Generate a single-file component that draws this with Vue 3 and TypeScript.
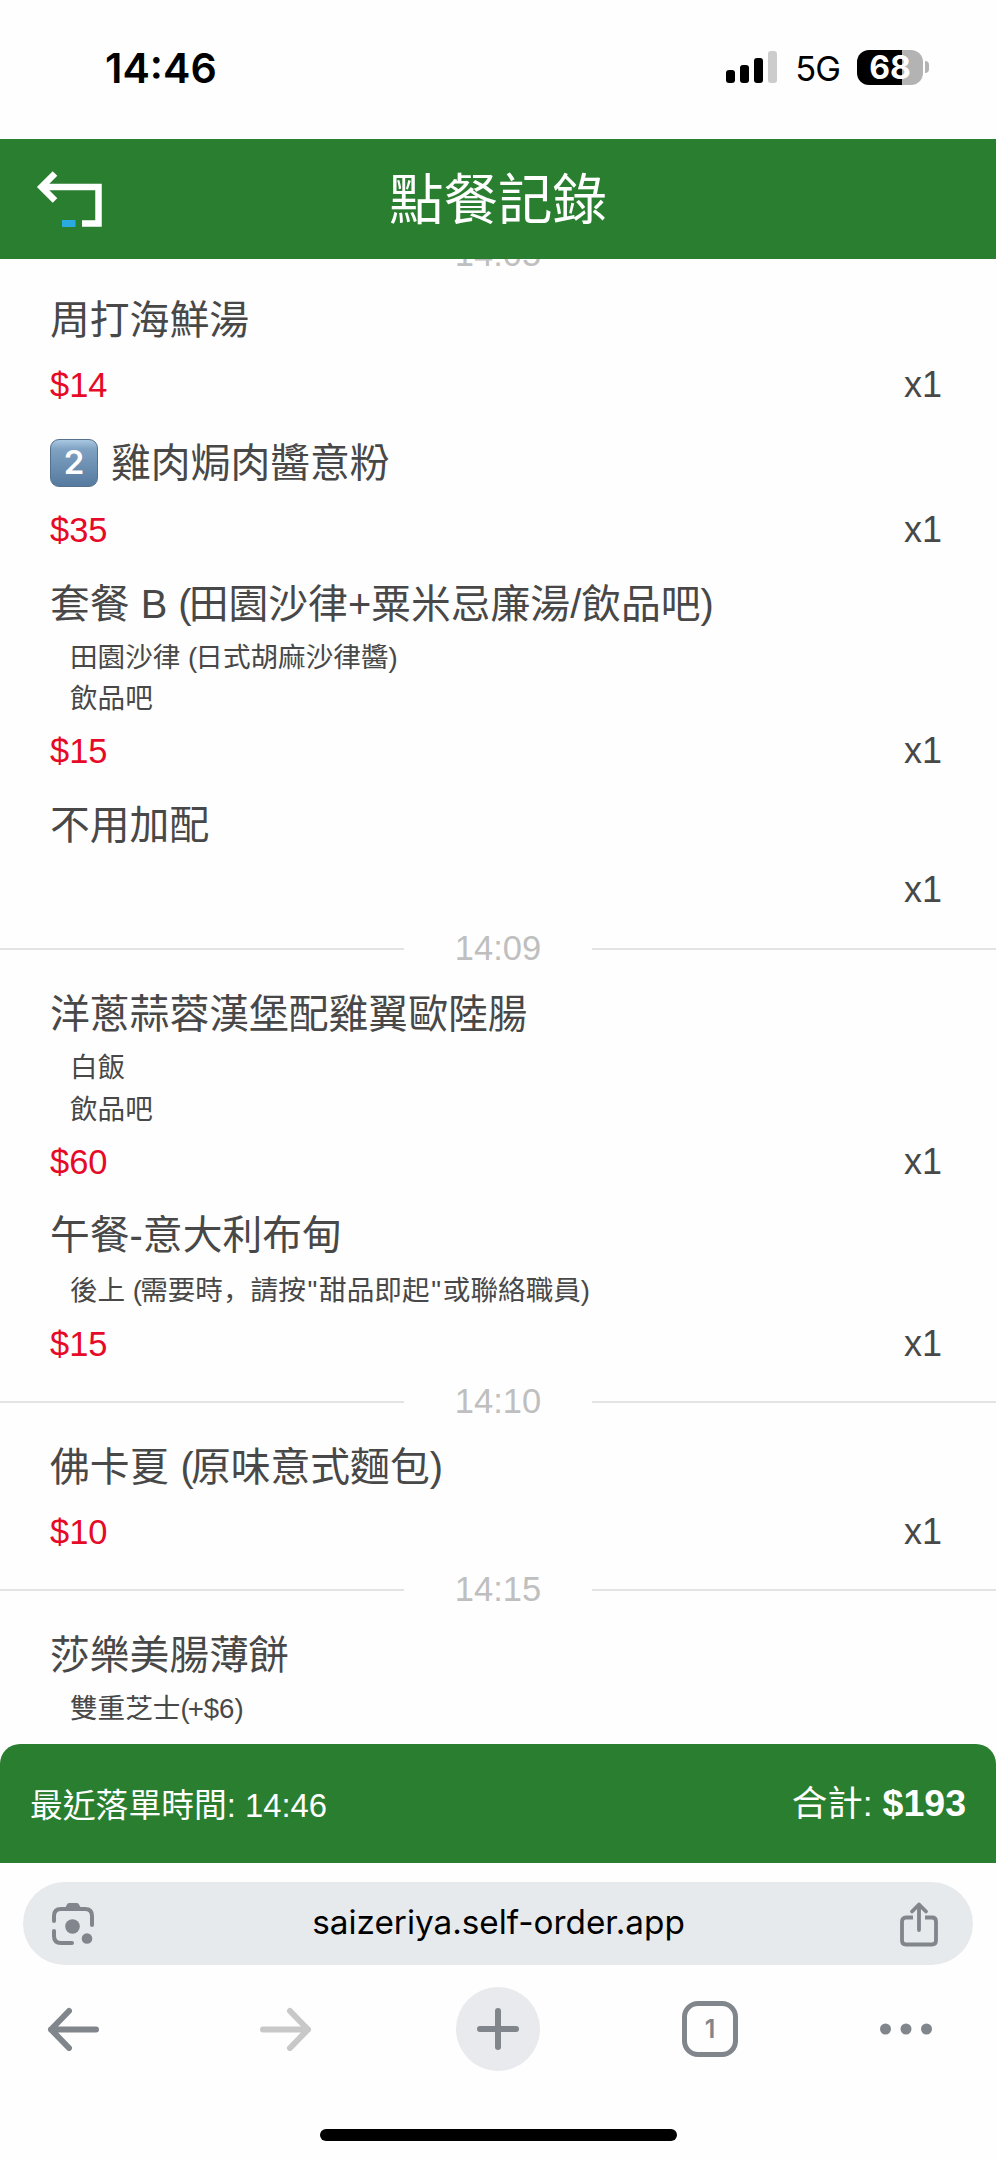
<script setup lang="ts">
interface OrderItem {
  name: string
  badge?: string
  options?: string[]
  price?: string
  qty: string
}
interface OrderGroup {
  time: string
  items: OrderItem[]
}
interface Segment {
  text: string
  kind: string
}

const groups: OrderGroup[] = [
  {
    time: '14:05',
    items: [
      { name: '周打海鮮湯', price: '$14', qty: 'x1' },
      { name: '雞肉焗肉醬意粉', badge: '2', price: '$35', qty: 'x1' },
      {
        name: '套餐 B (田園沙律+粟米忌廉湯/飲品吧)',
        options: ['田園沙律 (日式胡麻沙律醬)', '飲品吧'],
        price: '$15',
        qty: 'x1',
      },
      { name: '不用加配', qty: 'x1' },
    ],
  },
  {
    time: '14:09',
    items: [
      { name: '洋蔥蒜蓉漢堡配雞翼歐陸腸', options: ['白飯', '飲品吧'], price: '$60', qty: 'x1' },
      {
        name: '午餐-意大利布甸',
        options: ['後上 (需要時，請按"甜品即起"或聯絡職員)'],
        price: '$15',
        qty: 'x1',
      },
    ],
  },
  {
    time: '14:10',
    items: [{ name: '佛卡夏 (原味意式麵包)', price: '$10', qty: 'x1' }],
  },
  {
    time: '14:15',
    items: [{ name: '莎樂美腸薄餅', options: ['雙重芝士(+$6)'], price: '', qty: '' }],
  },
]

// Punctuation gets its own span so its spacing can be tuned against CJK text.
function segments(text: string): Segment[] {
  return text
    .split(/([()"，])/)
    .filter((part) => part !== '')
    .map((part) => {
      if (part === '(' || part === ')') return { text: part, kind: 'paren' }
      if (part === '"') return { text: part, kind: 'quote' }
      if (part === '，') return { text: part, kind: 'comma' }
      return { text: part, kind: 'plain' }
    })
}
</script>

<template>
  <div class="phone">
    <div class="status">
      <span class="clock">14:46</span>
      <div class="indicators">
        <svg class="signal" width="52" height="34" viewBox="0 0 52 34">
          <rect x="0" y="20" width="9" height="13" rx="3" />
          <rect x="14" y="15" width="9" height="18" rx="3" />
          <rect x="28" y="8" width="9" height="25" rx="3" />
          <rect x="42" y="1" width="9" height="32" rx="3" fill="#ccc" />
        </svg>
        <span class="network">5G</span>
        <div class="battery"><span>68</span></div>
        <i class="battery-cap"></i>
      </div>
    </div>

    <header class="header">
      <svg class="back" width="68" height="60" viewBox="0 0 68 60">
        <path d="M19 4.500 5.500 18 19 31.500M7 18H62.500V54.500H46" fill="none" stroke="#fff" stroke-width="6.500" />
        <rect x="26" y="51" width="13.500" height="7" fill="#29abe2" />
      </svg>
      <h1>點餐記錄</h1>
    </header>

    <main class="list">
      <section v-for="group in groups" :key="group.time">
        <div class="divider"><span>{{ group.time }}</span></div>
        <article v-for="item in group.items" :key="item.name" class="item">
          <h2 class="name" :class="{ badged: item.badge }">
            <span v-if="item.badge" class="badge">{{ item.badge }}</span>
            <span class="label"><span v-for="(s, i) in segments(item.name)" :key="i" :class="s.kind">{{ s.text }}</span></span>
          </h2>
          <ul v-if="item.options" class="options">
            <li v-for="option in item.options" :key="option"><span v-for="(s, i) in segments(option)" :key="i" :class="s.kind">{{ s.text }}</span></li>
          </ul>
          <div class="row">
            <span class="price">{{ item.price }}</span>
            <span class="qty">{{ item.qty }}</span>
          </div>
        </article>
      </section>
    </main>

    <footer class="summary">
      <span class="last">最近落單時間: 14:46</span>
      <span class="total">合計: <b>$193</b></span>
    </footer>

    <div class="browser">
      <div class="address">
        <svg width="44" height="44" viewBox="0 0 44 44" fill="none" stroke="#80868b" stroke-width="4" stroke-linecap="round">
          <path d="M3 19V14Q3 7 10 7H34Q41 7 41 14V23M3 29V34Q3 41 10 41H21" />
          <path d="M13 8 16 2.500Q16.500 1 18 1H26Q27.500 1 28 2.500L31 8Z" fill="#80868b" stroke="none" />
          <circle cx="21.500" cy="24.500" r="7.300" fill="#80868b" stroke="none" />
          <circle cx="36" cy="36.500" r="5.300" fill="#80868b" stroke="none" />
        </svg>
        <span class="url">saizeriya.self-order.app</span>
        <svg width="40" height="46" viewBox="0 0 40 46" fill="none" stroke="#80868b" stroke-width="3.800" stroke-linecap="round" stroke-linejoin="round">
          <path d="M14 16.500H7Q3 16.500 3 20.500V39.500Q3 43.500 7 43.500H33Q37 43.500 37 39.500V20.500Q37 16.500 33 16.500H26" stroke-linecap="butt" />
          <path d="M20 29V3.500M13 10.500 20 3.500 27 10.500" />
        </svg>
      </div>
      <nav class="tools">
        <svg width="52" height="44" viewBox="0 0 52 44" fill="none" stroke="#80868b" stroke-width="6" stroke-linecap="round" stroke-linejoin="round">
          <path d="M49 22.500H4M22 4 4 22.500 22 41" />
        </svg>
        <svg class="forward" width="52" height="44" viewBox="0 0 52 44" fill="none" stroke="#c8c8c8" stroke-width="6" stroke-linecap="round" stroke-linejoin="round">
          <path d="M3 22.500H48M30 4 48 22.500 30 41" />
        </svg>
        <svg width="84" height="84" viewBox="0 0 84 84" fill="none" stroke="#80868b" stroke-width="6" stroke-linecap="round">
          <circle cx="42" cy="42" r="42" fill="#e8eaed" stroke="none" />
          <path d="M24 42H60M42 24V60" />
        </svg>
        <div class="tabs">1</div>
        <svg width="52" height="12" viewBox="0 0 52 12" fill="#80868b">
          <circle cx="5.500" cy="6" r="5.500" />
          <circle cx="26" cy="6" r="5.500" />
          <circle cx="46.500" cy="6" r="5.500" />
        </svg>
      </nav>
      <div class="home"></div>
    </div>
  </div>
</template>

<style>
body {
  margin: 0;
  background: #fff;
}
</style>

<style scoped>
.phone {
  width: 996px;
  height: 2160px;
  display: flex;
  flex-direction: column;
  overflow: hidden;
  background: #fefefe;
  color: #484848;
  font-family: "Liberation Sans", "Noto Sans CJK TC", sans-serif;
}
.status {
  flex: none;
  box-sizing: border-box;
  height: 139px;
  padding: 44px 67px 0 105px;
  display: flex;
  justify-content: space-between;
  align-items: flex-start;
  color: #000;
  font-family: Inter, sans-serif;
}
.clock {
  font-size: 41.2px;
  font-weight: 600;
  line-height: 48px;
}
.indicators {
  display: flex;
  align-items: center;
  height: 46px;
}
.network {
  margin: 4px 17px 0 17px;
  font-size: 34.5px;
  font-weight: 400;
  letter-spacing: -1px;
  line-height: 44px;
}
.battery {
  width: 66px;
  height: 35px;
  border-radius: 12px;
  background: linear-gradient(90deg, #000 45px, #b3b3b3 45px);
  color: #fff;
  font-size: 32px;
  font-weight: 700;
  line-height: 35px;
  text-align: center;
}
.battery-cap {
  width: 4px;
  height: 12px;
  margin-left: 2px;
  border-radius: 0 5px 5px 0;
  background: #b3b3b3;
}
.header {
  flex: none;
  display: grid;
  grid-template-columns: 68px 1fr 68px;
  align-items: center;
  box-sizing: border-box;
  height: 119.5px;
  padding: 0 36px;
  background: #2a7e2f;
  color: #fff;
}
h1 {
  margin: 4px 0 0;
  font-size: 54.5px;
  font-weight: 400;
  line-height: 80px;
  text-align: center;
}
.list {
  flex: none;
  height: 1485px;
  overflow: hidden;
}
.divider {
  display: grid;
  grid-template-columns: 1fr 188px 1fr;
  align-items: center;
  height: 36px;
  margin-bottom: 14px;
  color: #bfbfbf;
  font-size: 34.5px;
  line-height: 36px;
  text-align: center;
}
.divider span {
  margin-top: -2px;
}
.divider::before,
.divider::after {
  content: "";
  height: 2px;
  background: #e3e3e3;
}
section:first-child .divider {
  margin-top: -22px;
}
.item {
  padding: 0 54px 8px 50px;
}
section:not(:first-child) .item {
  padding-bottom: 7.2px;
}
.name {
  display: flex;
  align-items: center;
  gap: 13px;
  height: 66px;
  margin: 0;
  font-size: 39.8px;
  font-weight: 400;
  line-height: 66px;
  white-space: nowrap;
}
.label {
  white-space: pre;
}
.name.badged {
  height: 72px;
  padding-top: 2px;
  box-sizing: border-box;
}
.badge {
  width: 48px;
  height: 48px;
  box-sizing: border-box;
  border: 1px solid #56718d;
  border-radius: 9px;
  background: linear-gradient(#a9c8e2, #7fa2c2 20%, #567a9f);
  color: #fff;
  font: 600 33px/45px Inter, sans-serif;
  text-align: center;
}
.options {
  margin: 0;
  padding: 0 0 0 20px;
  list-style: none;
  font-size: 27.6px;
  line-height: 41.4px;
  white-space: pre;
}
.paren {
  letter-spacing: -0.07em;
}
.quote {
  padding: 0 0.065em;
}
.comma {
  font-family: "Noto Sans CJK SC", sans-serif;
}
.row {
  display: flex;
  justify-content: space-between;
  height: 65px;
  font-size: 34.5px;
  line-height: 65px;
}
.price {
  color: #e60a28;
}
.qty {
  font-size: 36px;
  line-height: 63px;
}
.summary {
  flex: none;
  box-sizing: border-box;
  height: 119.5px;
  padding: 0 30px;
  display: flex;
  justify-content: space-between;
  align-items: center;
  border-radius: 20px 20px 0 0;
  background: #2a7e2f;
  color: #fff;
  font-size: 32.8px;
}
.last {
  margin-top: -1px;
}
.total {
  margin-top: -5px;
  font-size: 35.5px;
}
.total b {
  font-size: 37.5px;
}
.browser {
  flex: 1;
  display: flex;
  flex-direction: column;
  align-items: center;
}
.address {
  box-sizing: border-box;
  width: 950px;
  height: 83px;
  margin-top: 19px;
  padding: 0 34px 0 28px;
  display: flex;
  justify-content: space-between;
  align-items: center;
  border-radius: 42px;
  background: #e7eaec;
}
.url {
  margin: -4px 0 0 3px;
  color: #000;
  font: 400 33.3px/50px Inter, sans-serif;
}
.tools {
  box-sizing: border-box;
  width: 100%;
  height: 84px;
  margin-top: 22px;
  padding: 0 64px 0 47px;
  display: flex;
  justify-content: space-between;
  align-items: center;
}
.forward {
  margin: 0 2px 0 19px;
}
.tabs {
  box-sizing: border-box;
  width: 56px;
  height: 56px;
  border: 5px solid #80868b;
  border-radius: 16px;
  color: #80868b;
  font: 600 25px/47px Inter, sans-serif;
  text-align: center;
}
.home {
  width: 357px;
  height: 12px;
  margin-top: 58px;
  border-radius: 6px;
  background: #000;
}
</style>
